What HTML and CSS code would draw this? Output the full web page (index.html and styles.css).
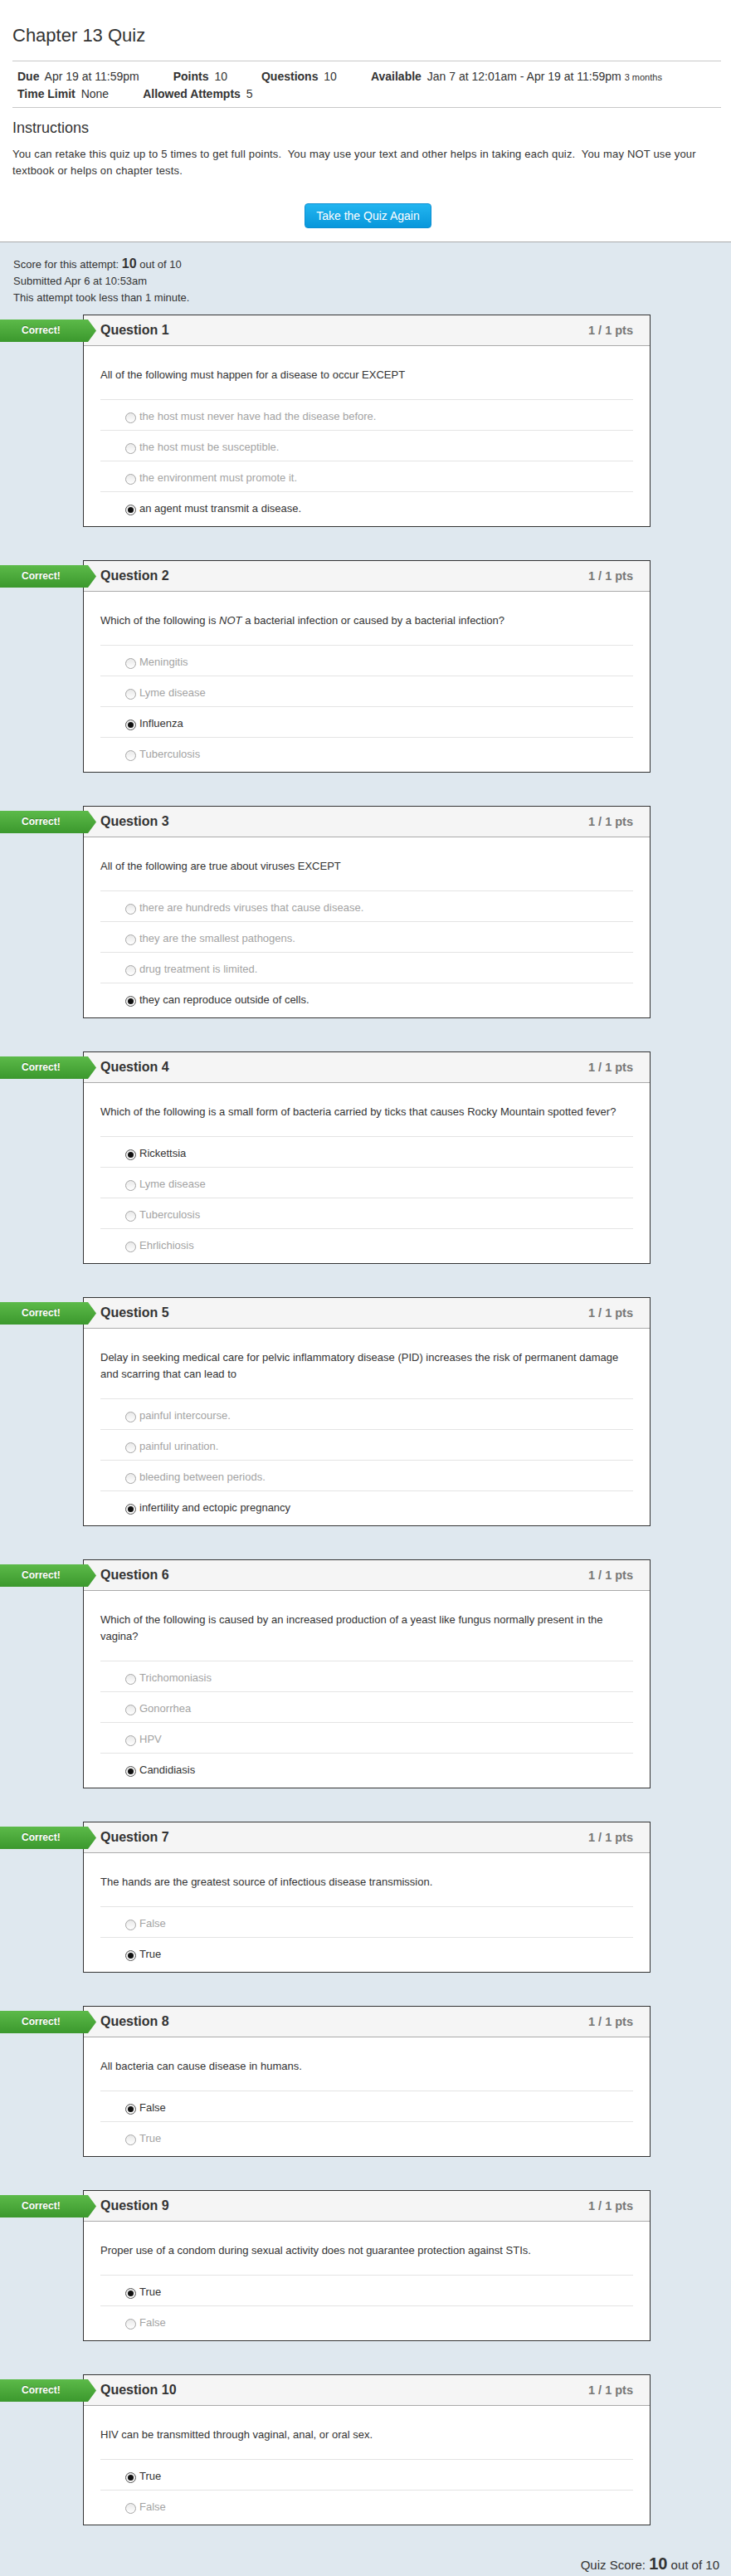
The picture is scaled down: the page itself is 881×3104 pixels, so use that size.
FILE: index.html
```html
<!DOCTYPE html>
<html lang="en">
<head>
<meta charset="utf-8">
<title>Chapter 13 Quiz</title>
<link rel="stylesheet" href="styles.css">
</head>
<body>
<header class="quiz-header">
  <h1 class="title">Chapter 13 Quiz</h1>
  <div class="details">
    <div class="details-row">
      <span class="item"><b>Due</b> Apr 19 at 11:59pm</span>
      <span class="item"><b>Points</b> 10</span>
      <span class="item"><b>Questions</b> 10</span>
      <span class="item"><b>Available</b> Jan 7 at 12:01am - Apr 19 at 11:59pm <small>3 months</small></span>
    </div>
    <div class="details-row">
      <span class="item"><b>Time Limit</b> None</span>
      <span class="item"><b>Allowed Attempts</b> 5</span>
    </div>
  </div>
  <h2 class="instr-title">Instructions</h2>
  <p class="instr">You can retake this quiz up to 5 times to get full points.&nbsp; You may use your text and other helps in taking each quiz.&nbsp; You may NOT use your textbook or helps on chapter tests.</p>
  <div class="btn-wrap"><button class="btn">Take the Quiz Again</button></div>
</header>

<main class="results">
  <div class="score">
    <div>Score for this attempt: <b class="big">10</b> out of 10</div>
    <div>Submitted Apr 6 at 10:53am</div>
    <div>This attempt took less than 1 minute.</div>
  </div>

  <div class="questions">
    <section class="question">
      <div class="tag">Correct!</div>
      <div class="q-head"><span class="q-name">Question 1</span><span class="q-pts">1 / 1 pts</span></div>
      <div class="q-body">
        <div class="q-text">All of the following must happen for a disease to occur EXCEPT</div>
        <div class="answer"><span class="radio"></span>the host must never have had the disease before.</div>
        <div class="answer"><span class="radio"></span>the host must be susceptible.</div>
        <div class="answer"><span class="radio"></span>the environment must promote it.</div>
        <div class="answer selected"><span class="radio"></span>an agent must transmit a disease.</div>
      </div>
    </section>

    <section class="question">
      <div class="tag">Correct!</div>
      <div class="q-head"><span class="q-name">Question 2</span><span class="q-pts">1 / 1 pts</span></div>
      <div class="q-body">
        <div class="q-text">Which of the following is <em>NOT</em> a bacterial infection or caused by a bacterial infection?</div>
        <div class="answer"><span class="radio"></span>Meningitis</div>
        <div class="answer"><span class="radio"></span>Lyme disease</div>
        <div class="answer selected"><span class="radio"></span>Influenza</div>
        <div class="answer"><span class="radio"></span>Tuberculosis</div>
      </div>
    </section>

    <section class="question">
      <div class="tag">Correct!</div>
      <div class="q-head"><span class="q-name">Question 3</span><span class="q-pts">1 / 1 pts</span></div>
      <div class="q-body">
        <div class="q-text">All of the following are true about viruses EXCEPT</div>
        <div class="answer"><span class="radio"></span>there are hundreds viruses that cause disease.</div>
        <div class="answer"><span class="radio"></span>they are the smallest pathogens.</div>
        <div class="answer"><span class="radio"></span>drug treatment is limited.</div>
        <div class="answer selected"><span class="radio"></span>they can reproduce outside of cells.</div>
      </div>
    </section>

    <section class="question">
      <div class="tag">Correct!</div>
      <div class="q-head"><span class="q-name">Question 4</span><span class="q-pts">1 / 1 pts</span></div>
      <div class="q-body">
        <div class="q-text">Which of the following is a small form of bacteria carried by ticks that causes Rocky Mountain spotted fever?</div>
        <div class="answer selected"><span class="radio"></span>Rickettsia</div>
        <div class="answer"><span class="radio"></span>Lyme disease</div>
        <div class="answer"><span class="radio"></span>Tuberculosis</div>
        <div class="answer"><span class="radio"></span>Ehrlichiosis</div>
      </div>
    </section>

    <section class="question">
      <div class="tag">Correct!</div>
      <div class="q-head"><span class="q-name">Question 5</span><span class="q-pts">1 / 1 pts</span></div>
      <div class="q-body">
        <div class="q-text">Delay in seeking medical care for pelvic inflammatory disease (PID) increases the risk of permanent damage and scarring that can lead to</div>
        <div class="answer"><span class="radio"></span>painful intercourse.</div>
        <div class="answer"><span class="radio"></span>painful urination.</div>
        <div class="answer"><span class="radio"></span>bleeding between periods.</div>
        <div class="answer selected"><span class="radio"></span>infertility and ectopic pregnancy</div>
      </div>
    </section>

    <section class="question">
      <div class="tag">Correct!</div>
      <div class="q-head"><span class="q-name">Question 6</span><span class="q-pts">1 / 1 pts</span></div>
      <div class="q-body">
        <div class="q-text">Which of the following is caused by an increased production of a yeast like fungus normally present in the vagina?</div>
        <div class="answer"><span class="radio"></span>Trichomoniasis</div>
        <div class="answer"><span class="radio"></span>Gonorrhea</div>
        <div class="answer"><span class="radio"></span>HPV</div>
        <div class="answer selected"><span class="radio"></span>Candidiasis</div>
      </div>
    </section>

    <section class="question">
      <div class="tag">Correct!</div>
      <div class="q-head"><span class="q-name">Question 7</span><span class="q-pts">1 / 1 pts</span></div>
      <div class="q-body">
        <div class="q-text">The hands are the greatest source of infectious disease transmission.</div>
        <div class="answer"><span class="radio"></span>False</div>
        <div class="answer selected"><span class="radio"></span>True</div>
      </div>
    </section>

    <section class="question">
      <div class="tag">Correct!</div>
      <div class="q-head"><span class="q-name">Question 8</span><span class="q-pts">1 / 1 pts</span></div>
      <div class="q-body">
        <div class="q-text">All bacteria can cause disease in humans.</div>
        <div class="answer selected"><span class="radio"></span>False</div>
        <div class="answer"><span class="radio"></span>True</div>
      </div>
    </section>

    <section class="question">
      <div class="tag">Correct!</div>
      <div class="q-head"><span class="q-name">Question 9</span><span class="q-pts">1 / 1 pts</span></div>
      <div class="q-body">
        <div class="q-text">Proper use of a condom during sexual activity does not guarantee protection against STIs.</div>
        <div class="answer selected"><span class="radio"></span>True</div>
        <div class="answer"><span class="radio"></span>False</div>
      </div>
    </section>

    <section class="question">
      <div class="tag">Correct!</div>
      <div class="q-head"><span class="q-name">Question 10</span><span class="q-pts">1 / 1 pts</span></div>
      <div class="q-body">
        <div class="q-text">HIV can be transmitted through vaginal, anal, or oral sex.</div>
        <div class="answer selected"><span class="radio"></span>True</div>
        <div class="answer"><span class="radio"></span>False</div>
      </div>
    </section>
  </div>

  <div class="final-score">Quiz Score: <b class="final-big">10</b> out of 10</div>
</main>
</body>
</html>
```

FILE: styles.css
```css
html, body {
  margin: 0;
  padding: 0;
}
body {
  font-family: "Liberation Sans", Arial, sans-serif;
  font-size: 13px;
  color: #333;
  background: #dfe8ef;
}

.quiz-header {
  background: #fff;
  padding: 30px 12px 16px 15px;
}
.title {
  margin: 0 0 17px;
  font-size: 22px;
  line-height: 26px;
  font-weight: normal;
  color: #333;
}
.details {
  border-top: 1px solid #c8c8c8;
  border-bottom: 1px solid #c8c8c8;
  padding: 8px 0 6px 6px;
  font-size: 14px;
  line-height: 20px;
}
.details-row {
  display: flex;
  gap: 41px;
}
.details b {
  margin-right: 3px;
}
.details small {
  font-size: 11px;
}
.instr-title {
  margin: 13px 0 0;
  font-size: 18px;
  line-height: 22px;
  font-weight: normal;
}
.instr {
  margin: 11px 0 0;
  line-height: 20px;
  letter-spacing: 0.18px;
}
.btn-wrap {
  display: flex;
  justify-content: center;
  margin-top: 29px;
}
.btn {
  font-family: "Liberation Sans", Arial, sans-serif;
  font-size: 14px;
  color: #fff;
  height: 30px;
  padding: 0 13px;
  border: 1px solid #0b8fd2;
  border-radius: 4px;
  background: linear-gradient(#22b5f0, #0897db);
  margin-left: 3px;
}

.results {
  border-top: 1px solid #aaa;
  padding: 17px 0 14px;
}
.score {
  padding-left: 16px;
  line-height: 20px;
}
.score .big {
  font-size: 16px;
  line-height: 1;
}

.questions {
  margin: 10px 0 0 100px;
  width: 684px;
  display: flex;
  flex-direction: column;
  gap: 40px;
}
.question {
  position: relative;
  background: #fff;
  border: 1px solid #333;
}
.tag {
  position: absolute;
  left: -101px;
  top: 5px;
  width: 116px;
  height: 27px;
  line-height: 27px;
  padding-left: 26px;
  box-sizing: border-box;
  color: #fff;
  font-weight: bold;
  font-size: 12px;
  text-shadow: 0 -1px 0 rgba(0, 0, 0, 0.25);
  background: linear-gradient(#5cba49, #3b982d);
  clip-path: polygon(0 0, 106px 0, 116px 13.5px, 106px 27px, 0 27px);
}
.q-head {
  display: flex;
  justify-content: space-between;
  height: 36px;
  line-height: 36px;
  padding: 0 20px;
  background: #f5f5f5;
  border-bottom: 1px solid #aaa;
}
.q-name {
  font-size: 16px;
  font-weight: bold;
  color: #333;
}
.q-pts {
  font-size: 14.5px;
  font-weight: bold;
  color: #777;
}
.q-body {
  padding: 0 20px 5px;
}
.q-text {
  padding-top: 25px;
  margin-bottom: 19px;
  line-height: 20px;
}
.answer {
  display: flex;
  align-items: center;
  border-top: 1px solid #e4e4e4;
  padding: 10px 0 6px 30px;
  line-height: 20px;
  color: #a3a3a3;
}
.answer.selected {
  color: #333;
}
.radio {
  flex: none;
  width: 11px;
  height: 11px;
  margin: 3px 4px 0 0;
  border: 1px solid #a5a5a5;
  border-radius: 50%;
  background: linear-gradient(#e9e9e9, #fff);
  position: relative;
}
.selected .radio {
  border-color: #555;
}
.selected .radio::after {
  content: "";
  position: absolute;
  left: 2px;
  top: 2px;
  width: 7px;
  height: 7px;
  border-radius: 50%;
  background: #111;
}

.final-score {
  text-align: right;
  padding-right: 14px;
  margin-top: 36px;
  font-size: 15px;
  line-height: 24px;
}
.final-big {
  font-size: 20px;
  line-height: 1;
}
```
